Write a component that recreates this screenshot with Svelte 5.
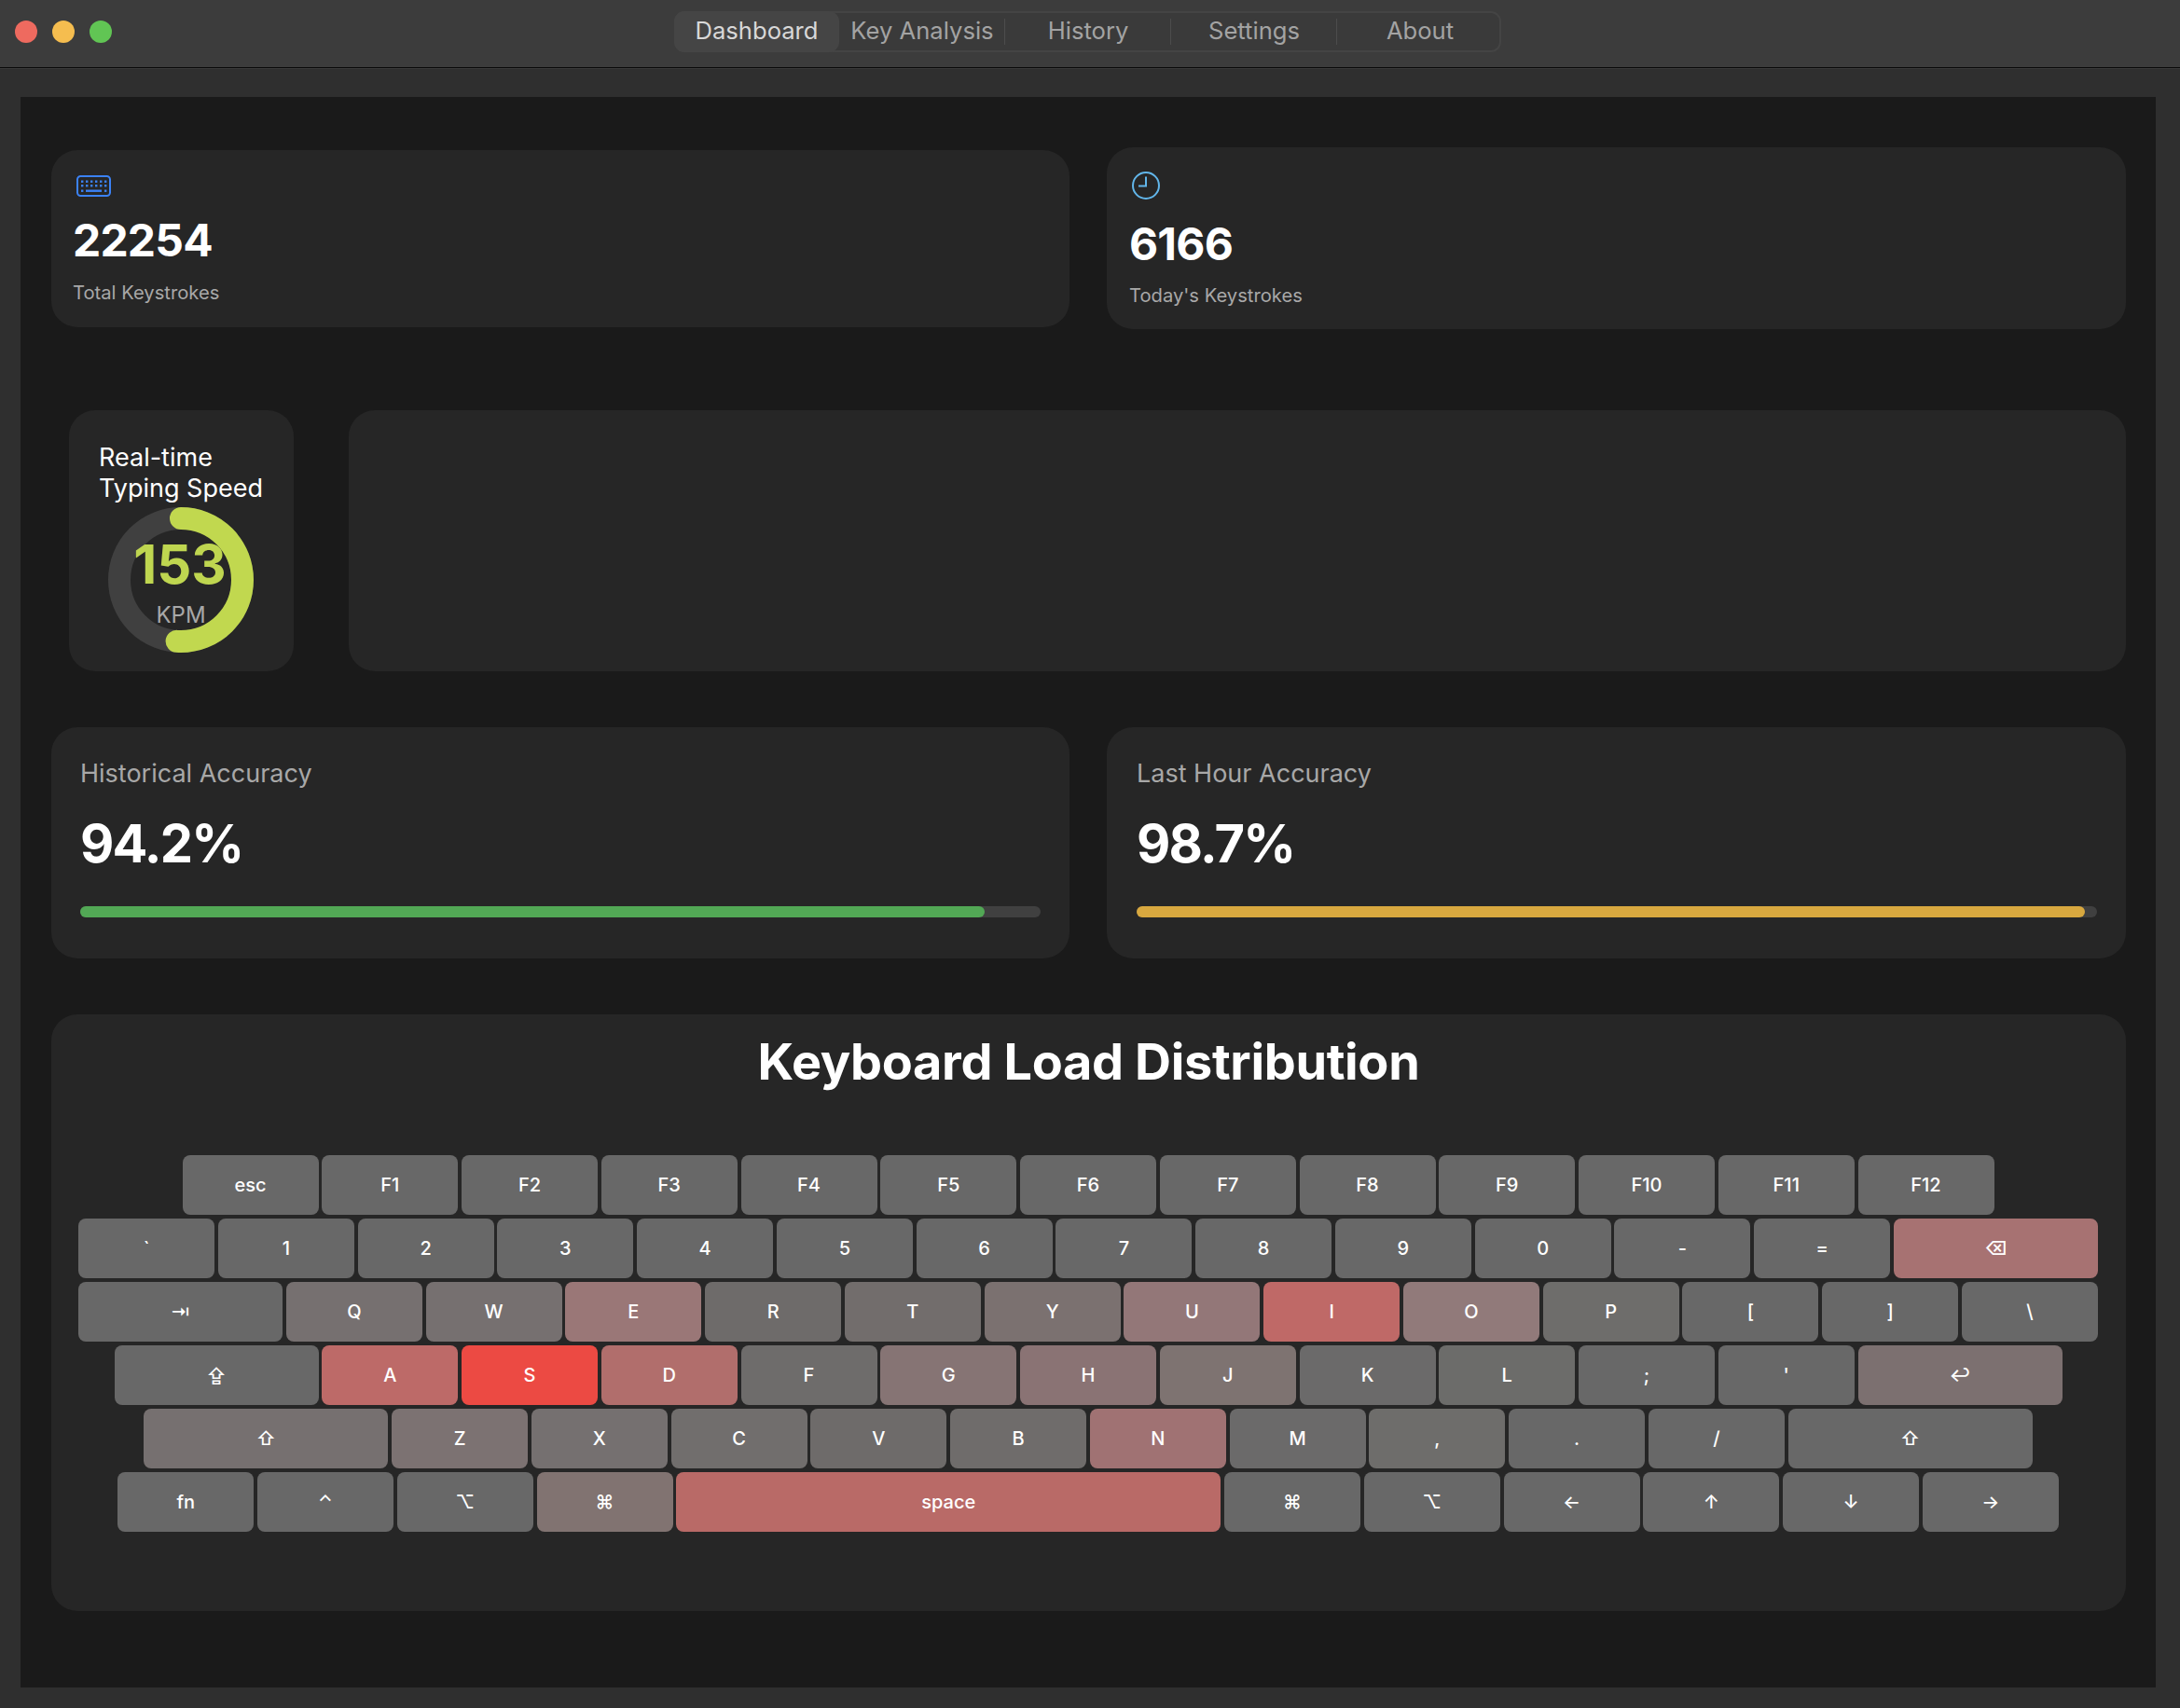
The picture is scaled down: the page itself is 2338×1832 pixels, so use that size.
<script>
  const tabs = ['Dashboard', 'Key Analysis', 'History', 'Settings', 'About'];

  const plain = (s) => s.split(' ').map((label) => ({ label }));

  // bg colours per key come from the load heatmap
  const load = {
    Q: '#767070', W: '#767070', E: '#9a7777', R: '#6e6b6a', T: '#726d6c', Y: '#7b7170',
    U: '#937778', I: '#bf6967', O: '#917a7a', P: '#6e6d6b', A: '#bd6a68', S: '#ec4a43',
    D: '#b16e6c', F: '#6e6c6b', G: '#867474', H: '#8a7374', J: '#7e7371', K: '#6b6a6a',
    L: '#6c6c6a', Z: '#7c7272', X: '#757070', C: '#716e6d', V: '#6e6b6a', B: '#6f6c6b',
    N: '#a07273', M: '#6b6a6a', ',': '#6e6d6b'
  };

  const rows = [
    plain('esc F1 F2 F3 F4 F5 F6 F7 F8 F9 F10 F11 F12'),
    [...plain('` 1 2 3 4 5 6 7 8 9 0 - ='), { label: '⌫', size: 'w15', bg: '#a77272' }],
    [{ label: '⇥', size: 'w15' }, ...plain('Q W E R T Y U I O P [ ] \\')],
    [{ label: '⇪', size: 'w15' }, ...plain("A S D F G H J K L ; '"), { label: '↩', size: 'w15', bg: '#7c7070' }],
    [{ label: '⇧', size: 'w18', bg: '#767070' }, ...plain('Z X C V B N M , . /'), { label: '⇧', size: 'w18' }],
    [
      ...plain('fn ⌃ ⌥'),
      { label: '⌘', bg: '#817371' },
      { label: 'space', size: 'w4', bg: '#b96a67' },
      ...plain('⌘ ⌥ ← ↑ ↓ →')
    ]
  ];

  const accuracy = [
    { title: 'Historical Accuracy', value: 94.2, color: '#52a855' },
    { title: 'Last Hour Accuracy', value: 98.7, color: '#d8a83f' }
  ];

  const speed = 153;
  const radius = 66;
  const circumference = 2 * Math.PI * radius;
  const dash = (speed / 300) * circumference;
</script>

<div class="window">
  <header class="titlebar">
    <div class="lights">
      <span class="light red"></span>
      <span class="light yellow"></span>
      <span class="light green"></span>
    </div>
    <nav class="tabs">
      {#each tabs as tab, i}
        <div class="tab" class:active={i === 0} class:divided={i > 0 && i < 4}>{tab}</div>
      {/each}
    </nav>
  </header>

  <main class="content">
    <section class="stats">
      <div class="card stat first">
        <svg class="icon-kb" viewBox="0 0 37 23" width="37" height="23" fill="#3b82f6">
          <rect x="1" y="1" width="35" height="21" rx="3.5" fill="none" stroke="#3b82f6" stroke-width="2" />
          {#each [0, 1, 2, 3, 4, 5] as n}
            <rect x={5 + n * 5} y="5.5" width="2.4" height="2.4" />
            <rect x={5 + n * 5} y="10" width="2.4" height="2.4" />
          {/each}
          <rect x="5" y="15.5" width="2.4" height="2.4" />
          <rect x="10" y="15.5" width="17" height="2.4" />
          <rect x="30" y="15.5" width="2.4" height="2.4" />
        </svg>
        <div class="num">22254</div>
        <div class="sub">Total Keystrokes</div>
      </div>
      <div class="card stat second">
        <svg class="icon-clock" viewBox="0 0 30 30" width="30" height="30" fill="none" stroke="#62b6ea" stroke-width="2">
          <circle cx="15" cy="15" r="14" />
          <path d="M15 5.5 V15.5 H7" />
        </svg>
        <div class="num">6166</div>
        <div class="sub">Today's Keystrokes</div>
      </div>
    </section>

    <section class="speed-row">
      <div class="card speed">
        <h3>Real-time<br />Typing Speed</h3>
        <div class="gauge">
          <svg viewBox="0 0 156 156" width="156" height="156">
            <circle cx="78" cy="78" r={radius} fill="none" stroke="#404040" stroke-width="24" />
            <circle
              cx="78"
              cy="78"
              r={radius}
              fill="none"
              stroke="#c1d84f"
              stroke-width="24"
              stroke-linecap="round"
              stroke-dasharray="{dash} {circumference}"
              transform="rotate(-90 78 78)"
            />
          </svg>
          <div class="gauge-num">{speed}</div>
          <div class="gauge-unit">KPM</div>
        </div>
      </div>
      <div class="card chart"></div>
    </section>

    <section class="accuracy">
      {#each accuracy as a}
        <div class="card acc">
          <div class="acc-title">{a.title}</div>
          <div class="acc-value">{a.value}%</div>
          <div class="bar"><div class="fill" style="width: {a.value}%; background: {a.color}"></div></div>
        </div>
      {/each}
    </section>

    <section class="card keyboard">
      <h2>Keyboard Load Distribution</h2>
      <div class="keys">
        {#each rows as row}
          <div class="key-row">
            {#each row as key}
              <div class="key {key.size ?? ''}" style="background: {key.bg ?? load[key.label] ?? '#686868'}">{key.label}</div>
            {/each}
          </div>
        {/each}
      </div>
    </section>
  </main>
</div>

<style>
  :global(body) {
    margin: 0;
    background: #2f2f2f;
    font-family: Inter, 'Noto Sans', sans-serif;
  }

  .window {
    width: 2338px;
    height: 1832px;
    display: flex;
    flex-direction: column;
    overflow: hidden;
  }

  .titlebar {
    height: 72px;
    flex: none;
    position: relative;
    display: flex;
    align-items: center;
    justify-content: center;
    background: #3c3c3c;
    border-bottom: 1px solid #0a0a0a;
    box-shadow: 0 1px 0 #3a3a3a;
  }

  .lights {
    position: absolute;
    left: 16px;
    top: 22px;
    display: flex;
    gap: 16px;
  }

  .light {
    width: 24px;
    height: 24px;
    border-radius: 50%;
  }

  .red { background: #ee6a5f; }
  .yellow { background: #f5bd4f; }
  .green { background: #61c554; }

  .tabs {
    display: flex;
    width: 887px;
    height: 44px;
    margin: -4px 0 0 -5px;
    box-sizing: border-box;
    background: #3a3a3a;
    border: 2px solid #444444;
    border-radius: 11px;
  }

  .tab {
    position: relative;
    flex: none;
    width: 178px;
    padding-bottom: 3px;
    box-sizing: border-box;
    display: flex;
    align-items: center;
    justify-content: center;
    font-size: 25.6px;
    color: #a3a3a3;
    white-space: nowrap;
  }

  .tab.active {
    width: 177px;
    margin: -2px 0 -2px -2px;
    background: #454545;
    border-radius: 11px;
    color: #d8d8d8;
  }

  .tab.divided::after {
    content: '';
    position: absolute;
    right: 0;
    top: 6px;
    bottom: 6px;
    width: 1px;
    background: #4c4c4c;
  }

  .content {
    flex: 1;
    margin: 31px 26px 22px 22px;
    padding: 54px 32px 0 33px;
    background: #1a1a1a;
  }

  .card {
    background: #262626;
    border-radius: 28px;
    box-sizing: border-box;
  }

  .stats {
    display: flex;
    align-items: center;
    justify-content: space-between;
    height: 195px;
  }

  .stat {
    width: 1092px;
    display: flex;
    flex-direction: column;
    align-items: flex-start;
  }

  .stat.first {
    height: 190px;
    padding: 27px 23px 0;
  }

  .stat.second {
    width: 1093px;
    height: 195px;
    padding: 26px 24px 0;
  }

  .stat.second .num {
    margin-top: 24px;
  }

  .stat.second .sub {
    margin-top: 18px;
  }

  .icon-kb, .icon-clock {
    display: block;
  }

  .icon-kb { margin-left: 4px; }
  .icon-clock { margin-left: 3px; }

  .num {
    margin-top: 23px;
    font-size: 48px;
    line-height: 48px;
    font-weight: 700;
    letter-spacing: -0.8px;
    color: #ffffff;
  }

  .sub {
    margin-top: 19px;
    font-size: 20.2px;
    line-height: 26px;
    color: #a8a8a8;
  }

  .speed-row {
    display: flex;
    gap: 59px;
    height: 280px;
    margin-top: 87px;
    padding-left: 19px;
  }

  .speed {
    width: 241px;
    flex: none;
    padding: 34px 0 0 32px;
    display: flex;
    flex-direction: column;
  }

  .speed h3 {
    margin: 0;
    font-size: 27px;
    line-height: 33px;
    font-weight: 400;
    color: #ffffff;
    white-space: nowrap;
  }

  .gauge {
    position: relative;
    width: 156px;
    height: 156px;
    margin: 4px 0 0 10px;
  }

  .gauge svg {
    display: block;
  }

  .gauge-num {
    position: absolute;
    left: -2px;
    right: 0;
    top: 41px;
    text-align: center;
    font-size: 58px;
    line-height: 40px;
    font-weight: 700;
    color: #bfd650;
  }

  .gauge-unit {
    position: absolute;
    left: 0;
    right: 0;
    top: 107px;
    text-align: center;
    font-size: 24px;
    line-height: 17px;
    color: #a8a8a8;
  }

  .chart {
    flex: 1;
  }

  .accuracy {
    display: flex;
    justify-content: space-between;
    margin-top: 60px;
  }

  .acc {
    width: 1092px;
    height: 248px;
    padding: 32px 31px 0;
  }

  .acc:last-child {
    width: 1093px;
    padding-left: 32px;
  }

  .acc-title {
    font-size: 27px;
    line-height: 36px;
    color: #a8a8a8;
  }

  .acc-value {
    margin-top: 27px;
    font-size: 56px;
    line-height: 60px;
    font-weight: 700;
    letter-spacing: -1.8px;
    color: #ffffff;
  }

  .bar {
    height: 12px;
    margin-top: 37px;
    border-radius: 6px;
    background: #404040;
  }

  .fill {
    height: 100%;
    border-radius: 6px;
  }

  .keyboard {
    height: 640px;
    margin-top: 60px;
    padding-top: 20px;
  }

  .keyboard h2 {
    margin: 0;
    text-align: center;
    font-size: 54px;
    line-height: 62px;
    font-weight: 700;
    letter-spacing: -0.35px;
    color: #ffffff;
  }

  .keys {
    margin: 69px 0 0 -1px;
    display: flex;
    flex-direction: column;
    gap: 4px;
  }

  .key-row {
    display: flex;
    justify-content: center;
    gap: 3.75px;
  }

  .key {
    width: 146px;
    height: 64px;
    flex: none;
    display: flex;
    align-items: center;
    justify-content: center;
    border-radius: 8px;
    font-size: 20px;
    font-weight: 500;
    color: #ffffff;
  }

  .w15 { width: 219px; }
  .w18 { width: 262px; }
  .w4 { width: 584px; }
</style>
